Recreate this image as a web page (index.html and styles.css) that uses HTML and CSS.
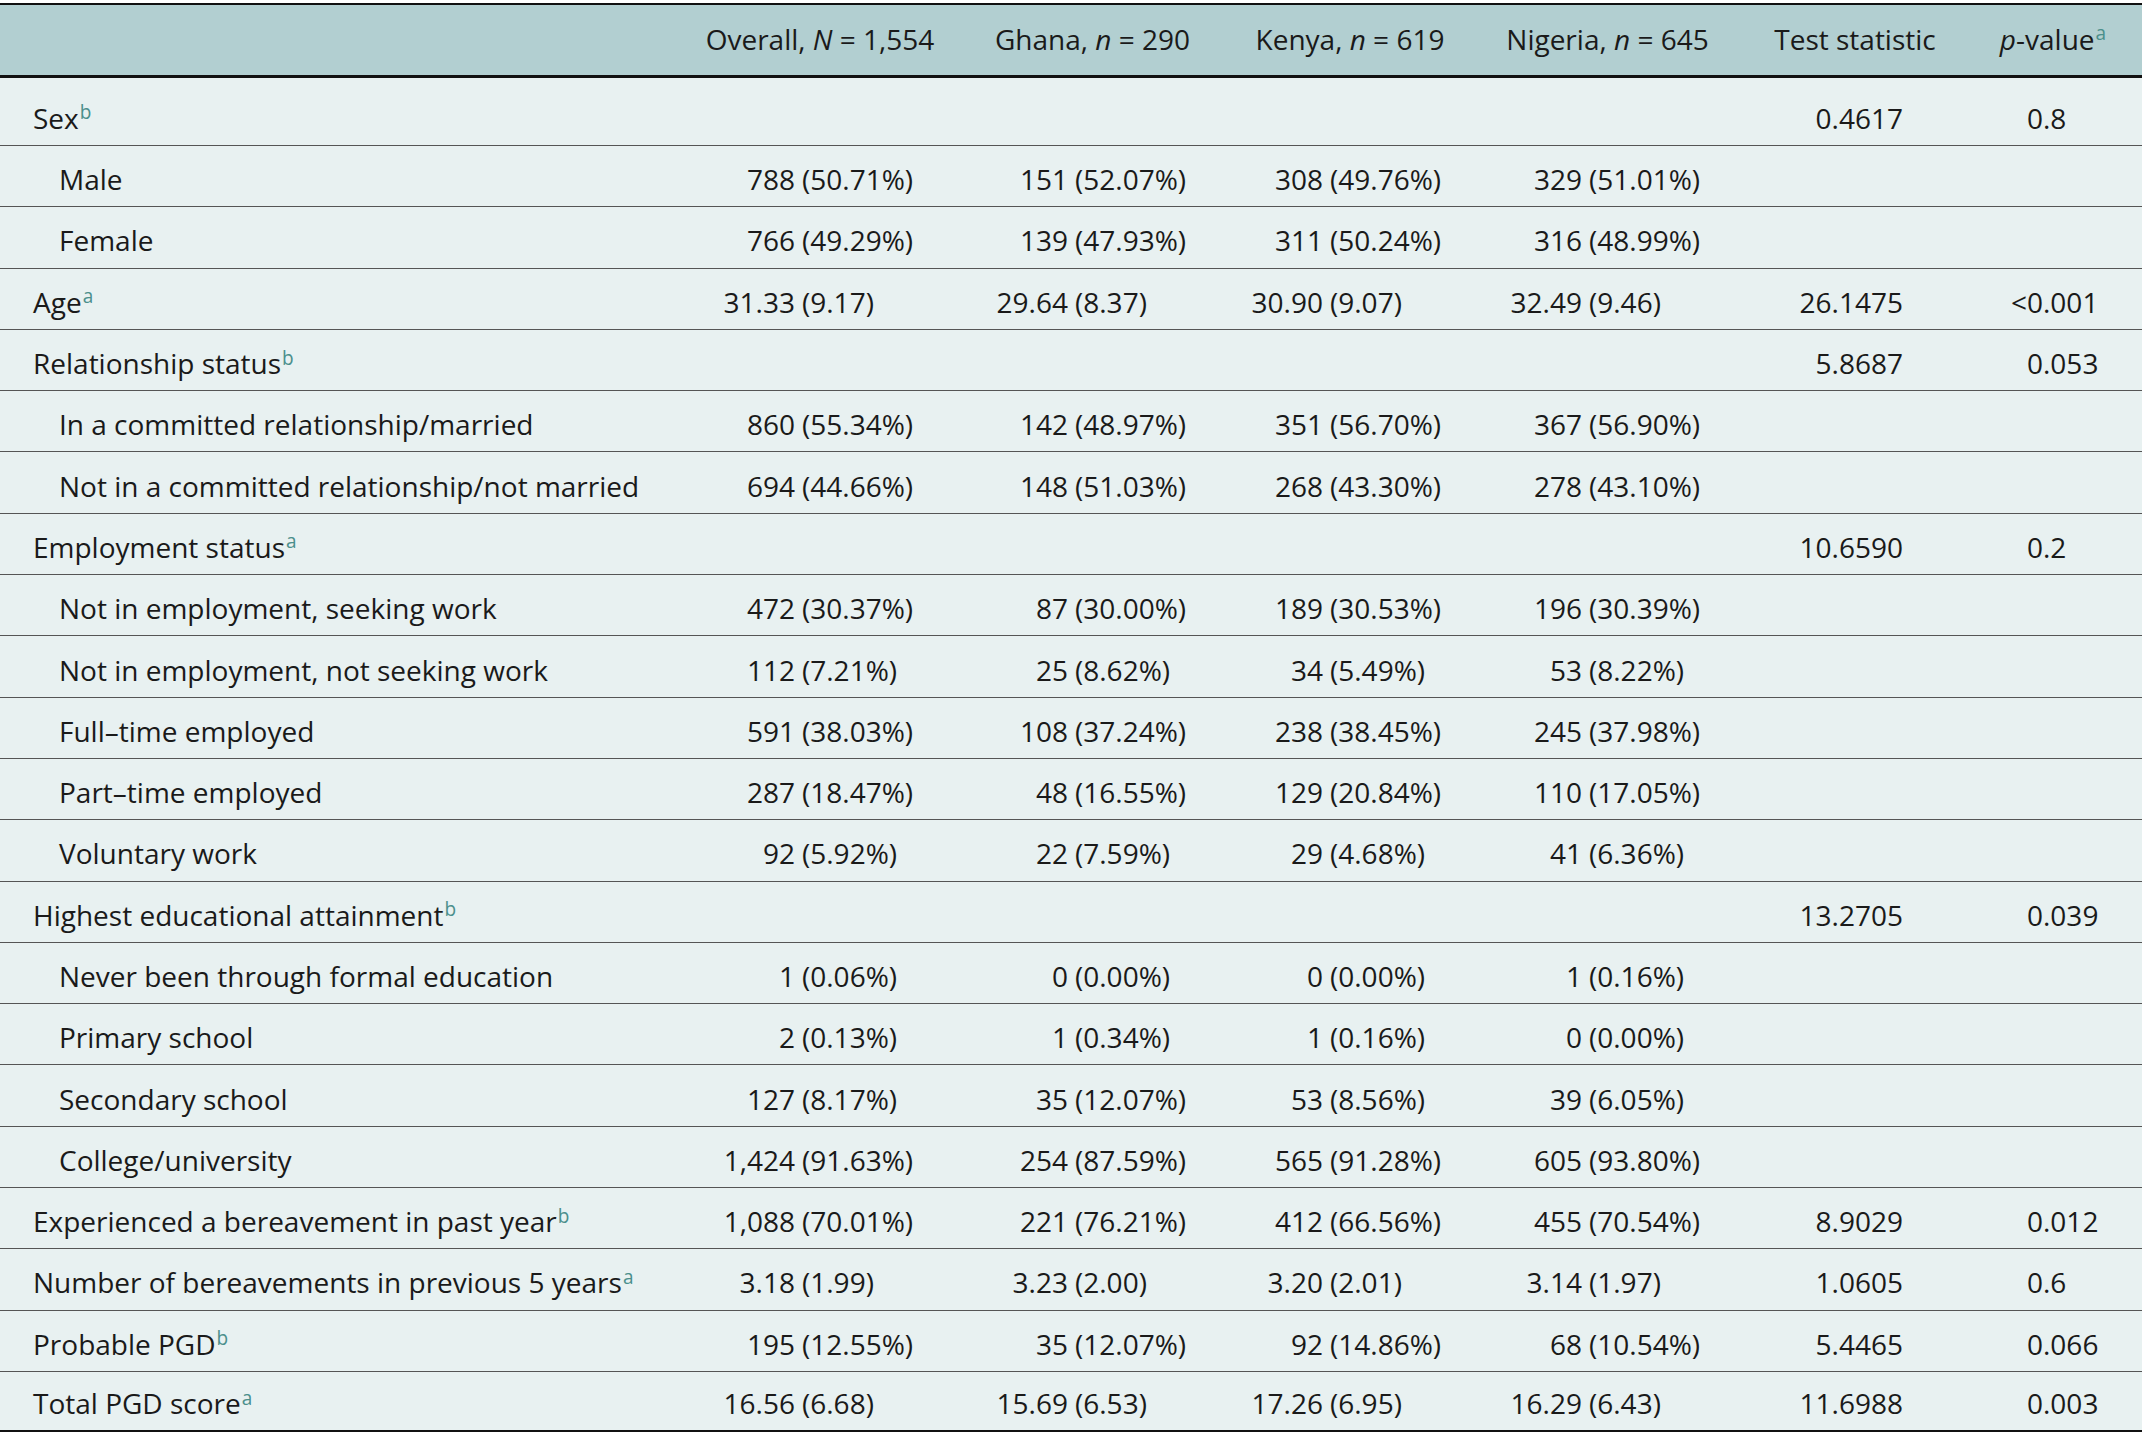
FILE: index.html
```html
<!DOCTYPE html>
<html lang="en">
<head>
<meta charset="utf-8">
<title>Participant characteristics</title>
<link rel="stylesheet" href="styles.css">
</head>
<body>
<table class="tbl">
  <colgroup>
    <col class="w-lab"><col class="w-all"><col class="w-gh"><col class="w-ke"><col class="w-ng"><col class="w-ts"><col class="w-pv">
  </colgroup>
  <thead>
    <tr>
      <th class="lab"></th>
      <th>Overall, <i>N</i> = 1,554</th>
      <th>Ghana, <i>n</i> = 290</th>
      <th>Kenya, <i>n</i> = 619</th>
      <th>Nigeria, <i>n</i> = 645</th>
      <th>Test statistic</th>
      <th class="hp"><i>p</i>-value<sup>a</sup></th>
    </tr>
  </thead>
  <tbody>
    <tr class="first">
      <td class="lab">Sex<sup>b</sup></td>
      <td class="all"></td><td class="gh"></td><td class="ke"></td><td class="ng"></td>
      <td class="ts">0.4617</td>
      <td class="pv"><div class="v"><span class="pa">0</span><span>.8</span></div></td>
    </tr>
    <tr>
      <td class="lab sub">Male</td>
      <td class="all"><div class="v"><span class="a">788</span><span>(50.71%)</span></div></td>
      <td class="gh"><div class="v"><span class="a">151</span><span>(52.07%)</span></div></td>
      <td class="ke"><div class="v"><span class="a">308</span><span>(49.76%)</span></div></td>
      <td class="ng"><div class="v"><span class="a">329</span><span>(51.01%)</span></div></td>
      <td class="ts"></td><td class="pv"></td>
    </tr>
    <tr>
      <td class="lab sub">Female</td>
      <td class="all"><div class="v"><span class="a">766</span><span>(49.29%)</span></div></td>
      <td class="gh"><div class="v"><span class="a">139</span><span>(47.93%)</span></div></td>
      <td class="ke"><div class="v"><span class="a">311</span><span>(50.24%)</span></div></td>
      <td class="ng"><div class="v"><span class="a">316</span><span>(48.99%)</span></div></td>
      <td class="ts"></td><td class="pv"></td>
    </tr>
    <tr>
      <td class="lab">Age<sup>a</sup></td>
      <td class="all"><div class="v"><span class="a">31.33</span><span>(9.17)</span></div></td>
      <td class="gh"><div class="v"><span class="a">29.64</span><span>(8.37)</span></div></td>
      <td class="ke"><div class="v"><span class="a">30.90</span><span>(9.07)</span></div></td>
      <td class="ng"><div class="v"><span class="a">32.49</span><span>(9.46)</span></div></td>
      <td class="ts">26.1475</td>
      <td class="pv"><div class="v"><span class="pa">&lt;0</span><span>.001</span></div></td>
    </tr>
    <tr>
      <td class="lab">Relationship status<sup>b</sup></td>
      <td class="all"></td><td class="gh"></td><td class="ke"></td><td class="ng"></td>
      <td class="ts">5.8687</td>
      <td class="pv"><div class="v"><span class="pa">0</span><span>.053</span></div></td>
    </tr>
    <tr>
      <td class="lab sub">In a committed relationship/married</td>
      <td class="all"><div class="v"><span class="a">860</span><span>(55.34%)</span></div></td>
      <td class="gh"><div class="v"><span class="a">142</span><span>(48.97%)</span></div></td>
      <td class="ke"><div class="v"><span class="a">351</span><span>(56.70%)</span></div></td>
      <td class="ng"><div class="v"><span class="a">367</span><span>(56.90%)</span></div></td>
      <td class="ts"></td><td class="pv"></td>
    </tr>
    <tr>
      <td class="lab sub">Not in a committed relationship/not married</td>
      <td class="all"><div class="v"><span class="a">694</span><span>(44.66%)</span></div></td>
      <td class="gh"><div class="v"><span class="a">148</span><span>(51.03%)</span></div></td>
      <td class="ke"><div class="v"><span class="a">268</span><span>(43.30%)</span></div></td>
      <td class="ng"><div class="v"><span class="a">278</span><span>(43.10%)</span></div></td>
      <td class="ts"></td><td class="pv"></td>
    </tr>
    <tr>
      <td class="lab">Employment status<sup>a</sup></td>
      <td class="all"></td><td class="gh"></td><td class="ke"></td><td class="ng"></td>
      <td class="ts">10.6590</td>
      <td class="pv"><div class="v"><span class="pa">0</span><span>.2</span></div></td>
    </tr>
    <tr>
      <td class="lab sub">Not in employment, seeking work</td>
      <td class="all"><div class="v"><span class="a">472</span><span>(30.37%)</span></div></td>
      <td class="gh"><div class="v"><span class="a">87</span><span>(30.00%)</span></div></td>
      <td class="ke"><div class="v"><span class="a">189</span><span>(30.53%)</span></div></td>
      <td class="ng"><div class="v"><span class="a">196</span><span>(30.39%)</span></div></td>
      <td class="ts"></td><td class="pv"></td>
    </tr>
    <tr>
      <td class="lab sub">Not in employment, not seeking work</td>
      <td class="all"><div class="v"><span class="a">112</span><span>(7.21%)</span></div></td>
      <td class="gh"><div class="v"><span class="a">25</span><span>(8.62%)</span></div></td>
      <td class="ke"><div class="v"><span class="a">34</span><span>(5.49%)</span></div></td>
      <td class="ng"><div class="v"><span class="a">53</span><span>(8.22%)</span></div></td>
      <td class="ts"></td><td class="pv"></td>
    </tr>
    <tr>
      <td class="lab sub">Full–time employed</td>
      <td class="all"><div class="v"><span class="a">591</span><span>(38.03%)</span></div></td>
      <td class="gh"><div class="v"><span class="a">108</span><span>(37.24%)</span></div></td>
      <td class="ke"><div class="v"><span class="a">238</span><span>(38.45%)</span></div></td>
      <td class="ng"><div class="v"><span class="a">245</span><span>(37.98%)</span></div></td>
      <td class="ts"></td><td class="pv"></td>
    </tr>
    <tr>
      <td class="lab sub">Part–time employed</td>
      <td class="all"><div class="v"><span class="a">287</span><span>(18.47%)</span></div></td>
      <td class="gh"><div class="v"><span class="a">48</span><span>(16.55%)</span></div></td>
      <td class="ke"><div class="v"><span class="a">129</span><span>(20.84%)</span></div></td>
      <td class="ng"><div class="v"><span class="a">110</span><span>(17.05%)</span></div></td>
      <td class="ts"></td><td class="pv"></td>
    </tr>
    <tr>
      <td class="lab sub">Voluntary work</td>
      <td class="all"><div class="v"><span class="a">92</span><span>(5.92%)</span></div></td>
      <td class="gh"><div class="v"><span class="a">22</span><span>(7.59%)</span></div></td>
      <td class="ke"><div class="v"><span class="a">29</span><span>(4.68%)</span></div></td>
      <td class="ng"><div class="v"><span class="a">41</span><span>(6.36%)</span></div></td>
      <td class="ts"></td><td class="pv"></td>
    </tr>
    <tr>
      <td class="lab">Highest educational attainment<sup>b</sup></td>
      <td class="all"></td><td class="gh"></td><td class="ke"></td><td class="ng"></td>
      <td class="ts">13.2705</td>
      <td class="pv"><div class="v"><span class="pa">0</span><span>.039</span></div></td>
    </tr>
    <tr>
      <td class="lab sub">Never been through formal education</td>
      <td class="all"><div class="v"><span class="a">1</span><span>(0.06%)</span></div></td>
      <td class="gh"><div class="v"><span class="a">0</span><span>(0.00%)</span></div></td>
      <td class="ke"><div class="v"><span class="a">0</span><span>(0.00%)</span></div></td>
      <td class="ng"><div class="v"><span class="a">1</span><span>(0.16%)</span></div></td>
      <td class="ts"></td><td class="pv"></td>
    </tr>
    <tr>
      <td class="lab sub">Primary school</td>
      <td class="all"><div class="v"><span class="a">2</span><span>(0.13%)</span></div></td>
      <td class="gh"><div class="v"><span class="a">1</span><span>(0.34%)</span></div></td>
      <td class="ke"><div class="v"><span class="a">1</span><span>(0.16%)</span></div></td>
      <td class="ng"><div class="v"><span class="a">0</span><span>(0.00%)</span></div></td>
      <td class="ts"></td><td class="pv"></td>
    </tr>
    <tr>
      <td class="lab sub">Secondary school</td>
      <td class="all"><div class="v"><span class="a">127</span><span>(8.17%)</span></div></td>
      <td class="gh"><div class="v"><span class="a">35</span><span>(12.07%)</span></div></td>
      <td class="ke"><div class="v"><span class="a">53</span><span>(8.56%)</span></div></td>
      <td class="ng"><div class="v"><span class="a">39</span><span>(6.05%)</span></div></td>
      <td class="ts"></td><td class="pv"></td>
    </tr>
    <tr>
      <td class="lab sub">College/university</td>
      <td class="all"><div class="v"><span class="a">1,424</span><span>(91.63%)</span></div></td>
      <td class="gh"><div class="v"><span class="a">254</span><span>(87.59%)</span></div></td>
      <td class="ke"><div class="v"><span class="a">565</span><span>(91.28%)</span></div></td>
      <td class="ng"><div class="v"><span class="a">605</span><span>(93.80%)</span></div></td>
      <td class="ts"></td><td class="pv"></td>
    </tr>
    <tr>
      <td class="lab">Experienced a bereavement in past year<sup>b</sup></td>
      <td class="all"><div class="v"><span class="a">1,088</span><span>(70.01%)</span></div></td>
      <td class="gh"><div class="v"><span class="a">221</span><span>(76.21%)</span></div></td>
      <td class="ke"><div class="v"><span class="a">412</span><span>(66.56%)</span></div></td>
      <td class="ng"><div class="v"><span class="a">455</span><span>(70.54%)</span></div></td>
      <td class="ts">8.9029</td>
      <td class="pv"><div class="v"><span class="pa">0</span><span>.012</span></div></td>
    </tr>
    <tr>
      <td class="lab">Number of bereavements in previous 5 years<sup>a</sup></td>
      <td class="all"><div class="v"><span class="a">3.18</span><span>(1.99)</span></div></td>
      <td class="gh"><div class="v"><span class="a">3.23</span><span>(2.00)</span></div></td>
      <td class="ke"><div class="v"><span class="a">3.20</span><span>(2.01)</span></div></td>
      <td class="ng"><div class="v"><span class="a">3.14</span><span>(1.97)</span></div></td>
      <td class="ts">1.0605</td>
      <td class="pv"><div class="v"><span class="pa">0</span><span>.6</span></div></td>
    </tr>
    <tr>
      <td class="lab">Probable PGD<sup>b</sup></td>
      <td class="all"><div class="v"><span class="a">195</span><span>(12.55%)</span></div></td>
      <td class="gh"><div class="v"><span class="a">35</span><span>(12.07%)</span></div></td>
      <td class="ke"><div class="v"><span class="a">92</span><span>(14.86%)</span></div></td>
      <td class="ng"><div class="v"><span class="a">68</span><span>(10.54%)</span></div></td>
      <td class="ts">5.4465</td>
      <td class="pv"><div class="v"><span class="pa">0</span><span>.066</span></div></td>
    </tr>
    <tr class="last">
      <td class="lab">Total PGD score<sup>a</sup></td>
      <td class="all"><div class="v"><span class="a">16.56</span><span>(6.68)</span></div></td>
      <td class="gh"><div class="v"><span class="a">15.69</span><span>(6.53)</span></div></td>
      <td class="ke"><div class="v"><span class="a">17.26</span><span>(6.95)</span></div></td>
      <td class="ng"><div class="v"><span class="a">16.29</span><span>(6.43)</span></div></td>
      <td class="ts">11.6988</td>
      <td class="pv"><div class="v"><span class="pa">0</span><span>.003</span></div></td>
    </tr>
  </tbody>
</table>
</body>
</html>
```

FILE: styles.css
```css
html, body {
  margin: 0;
  padding: 0;
  background: #ffffff;
}

body {
  font-family: "Open Sans", "Noto Sans", sans-serif;
  font-size: 28px;
  color: #1a1a1a;
}

.tbl {
  margin-top: 3px;
  width: 2142px;
  table-layout: fixed;
  border-collapse: separate;
  border-spacing: 0;
}

.w-lab { width: 690px; }
.w-all { width: 260px; }
.w-gh  { width: 285px; }
.w-ke  { width: 230px; }
.w-ng  { width: 285px; }
.w-ts  { width: 210px; }
.w-pv  { width: 182px; }

thead th {
  height: 68px;
  padding: 0 0 2px;
  background: #b2cfd1;
  font-weight: normal;
  text-align: center;
  white-space: nowrap;
  border-top: 2px solid #111;
  border-bottom: 3px solid #111;
}

thead th.hp {
  padding-left: 4px;
}

tbody tr {
  height: 61.3px;
}

tbody tr.first {
  height: 68px;
}

tbody tr.last {
  height: 60.3px;
}

tbody td {
  padding: 6px 0 0;
  background: #e8f1f1;
  border-bottom: 1px solid #555;
  white-space: nowrap;
  vertical-align: middle;
}

tbody tr.first td {
  padding-top: 12px;
}

tbody tr.last td {
  padding-top: 4px;
  border-bottom: 2px solid #111;
}

td.lab {
  padding-left: 33px;
}

td.lab.sub {
  padding-left: 59px;
}

sup {
  font-size: 0.68em;
  line-height: 0;
  vertical-align: 0.5em;
  color: #4b8f8c;
  margin-left: 1px;
}

.v {
  display: flex;
  align-items: baseline;
}

.v .a {
  width: 80px;
  text-align: right;
  margin-right: 7px;
}

td.all .v { padding-left: 25px; }
td.gh .v  { padding-left: 38px; }
td.ke .v  { padding-left: 8px; }
td.ng .v  { padding-left: 37px; }

td.ts {
  text-align: right;
  padding-right: 57px;
}

td.pv .v {
  padding-left: 43px;
}

.v .pa {
  width: 40px;
  text-align: right;
}
```
